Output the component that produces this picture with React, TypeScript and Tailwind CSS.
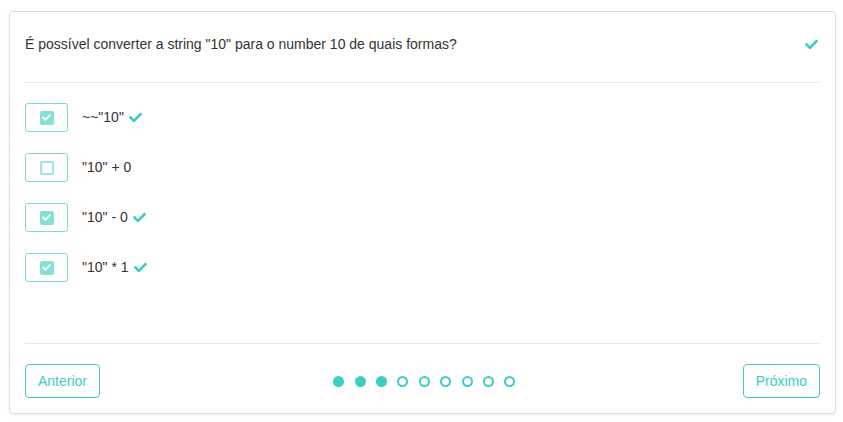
import React from "react";

const Check = ({ className = "" }: { className?: string }) => (
  <svg viewBox="0 0 512 512" className={className} fill="currentColor">
    <path d="M173.9 439.4l-166.4-166.4c-10-10-10-26.2 0-36.2l36.2-36.2c10-10 26.2-10 36.2 0L192 312.7 432.1 72.6c10-10 26.2-10 36.2 0l36.2 36.2c10 10 10 26.2 0 36.2l-294.4 294.4c-10 10-26.2 10-36.2 0z" />
  </svg>
);

const options = [
  { label: '~~"10"', checked: true },
  { label: '"10" + 0', checked: false },
  { label: '"10" - 0', checked: true },
  { label: '"10" * 1', checked: true },
];

export default function App() {
  return (
    <div className="bg-white w-[843px] h-[422px] pt-[11px] pl-[9px]" style={{ fontFamily: '"Liberation Sans", Arial, sans-serif' }}>
      <div className="w-[827px] h-[403px] border border-[#dcdcdc] rounded-[4px] shadow-[0_1px_2px_rgba(0,0,0,0.08)] flex flex-col px-[15px]">
        <div className="flex items-center justify-between pt-[22px] pb-[28px] border-b border-[#e8e8e8]">
          <span className="text-[14px] leading-[20px] text-[#333]">É possível converter a string "10" para o number 10 de quais formas?</span>
          <Check className="w-[13px] h-[13px] text-[#3ecdc0] mr-[2px]" />
        </div>
        <div className="flex-1 flex flex-col gap-[21px] pt-[20px]">
          {options.map((o, i) => (
            <div key={i} className="flex items-center">
              <div className="w-[43px] h-[29px] border border-[#7edbd2] rounded-[3px] flex items-center justify-center">
                {o.checked ? (
                  <div className="w-[14px] h-[14px] rounded-[2px] bg-[#85e0d7] flex items-center justify-center">
                    <Check className="w-[9px] h-[9px] text-white" />
                  </div>
                ) : (
                  <div className="w-[14px] h-[14px] rounded-[2px] border-2 border-[#9fe6df] bg-white" />
                )}
              </div>
              <span className="ml-[14px] text-[14px] text-[#333]">{o.label}</span>
              {o.checked && <Check className="ml-[5px] w-[13px] h-[13px] text-[#3ecdc0]" />}
            </div>
          ))}
        </div>
        <div className="border-t border-[#e8e8e8] pt-[20px] pb-[15px] flex items-center justify-between">
          <button className="h-[34px] px-[12px] border border-[#3ecdc0] rounded-[4px] text-[14px] text-[#3ecdc0] bg-white">Anterior</button>
          <div className="flex items-center gap-[10.4px] ml-[6px]">
            {Array.from({ length: 9 }).map((_, i) => (
              <div key={i} className={i < 3 ? "w-[11px] h-[11px] rounded-full bg-[#3ecdc0]" : "w-[11px] h-[11px] rounded-full border-2 border-[#3ecdc0]"} />
            ))}
          </div>
          <button className="h-[34px] px-[12px] border border-[#3ecdc0] rounded-[4px] text-[14px] text-[#3ecdc0] bg-white">Próximo</button>
        </div>
      </div>
    </div>
  );
}
